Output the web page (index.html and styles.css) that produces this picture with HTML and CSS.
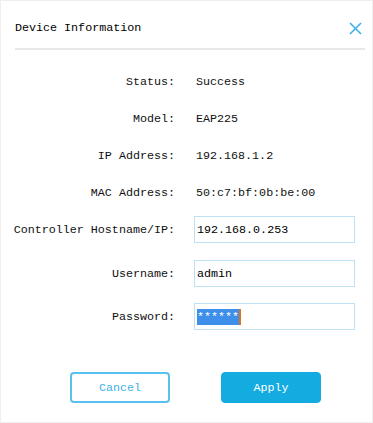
FILE: index.html
```html
<!DOCTYPE html>
<html>
<head>
  <title>Device Information</title>
  <link rel="stylesheet" href="styles.css">
</head>
<body>
  <div class="dialog">
    <div class="header">
      <span class="title">Device Information</span>
      <span class="close-icon">
        <svg width="13" height="13" viewBox="0 0 13 13"><path d="M1 1 L12 12 M12 1 L1 12" stroke="#3fb1e8" stroke-width="1.6" fill="none"/></svg>
      </span>
    </div>
    <div class="form">
      <div class="info-row"><label>Status:</label><span class="value">Success</span></div>
      <div class="info-row"><label>Model:</label><span class="value">EAP225</span></div>
      <div class="info-row"><label>IP Address:</label><span class="value">192.168.1.2</span></div>
      <div class="info-row"><label>MAC Address:</label><span class="value">50:c7:bf:0b:be:00</span></div>
      <div class="field-row first"><label>Controller Hostname/IP:</label><div class="text-input">192.168.0.253</div></div>
      <div class="field-row"><label>Username:</label><div class="text-input">admin</div></div>
      <div class="field-row last"><label>Password:</label><div class="text-input"><span class="selected">******</span><span class="caret"></span></div></div>
    </div>
    <div class="buttons">
      <button class="btn-cancel">Cancel</button>
      <button class="btn-apply">Apply</button>
    </div>
  </div>
</body>
</html>
```

FILE: styles.css
```css
body {
  margin: 0;
  font-family: "Liberation Mono", "DejaVu Sans Mono", monospace;
  font-size: 11.7px;
  color: #111;
  background: #fff;
}

.dialog {
  width: 373px;
  height: 423px;
  box-sizing: border-box;
  border: 1px solid #efefef;
  background: #fff;
}

.header {
  display: flex;
  justify-content: space-between;
  align-items: center;
  margin: 0 7px 0 14px;
  height: 46px;
  border-bottom: 2px solid #e8e8e8;
  padding-top: 1px;
}

.title {
  color: #000;
  font-size: 11.7px;
  margin-top: 5px;
}

.close-icon {
  display: flex;
  margin-top: 6px;
  margin-right: 3px;
}

.form {
  padding-top: 13px;
}

.info-row,
.field-row {
  display: flex;
  align-items: center;
}

.info-row {
  height: 37px;
}

.field-row {
  height: 27px;
  margin-top: 17px;
}

.field-row.first {
  margin-top: 5px;
}

.field-row.last {
  margin-top: 16px;
}

label {
  flex-shrink: 0;
  width: 162px;
  margin-left: 12px;
  text-align: right;
  white-space: nowrap;
  color: #111;
}

.value {
  margin-left: 21px;
}

.text-input {
  flex-shrink: 0;
  margin-left: 19px;
  width: 161px;
  height: 27px;
  box-sizing: border-box;
  border: 1px solid #bfe1f6;
  padding-left: 2px;
  display: flex;
  align-items: center;
  font-size: 11.7px;
  color: #000;
}

.selected {
  background: #3d8fe9;
  color: #fff;
  line-height: 16px;
}

.caret {
  width: 2px;
  height: 16px;
  background: #e0741c;
}

.buttons {
  display: flex;
  gap: 51px;
  padding-left: 69px;
  margin-top: 42px;
}

button {
  width: 100px;
  height: 31px;
  border-radius: 4px;
  font-family: "Liberation Mono", "DejaVu Sans Mono", monospace;
  font-size: 11.7px;
  cursor: pointer;
}

.btn-cancel {
  background: #fff;
  border: 2px solid #58c1ee;
  color: #3bb3ea;
}

.btn-apply {
  background: #14abe0;
  border: 1px solid #14abe0;
  color: #fff;
}
```
